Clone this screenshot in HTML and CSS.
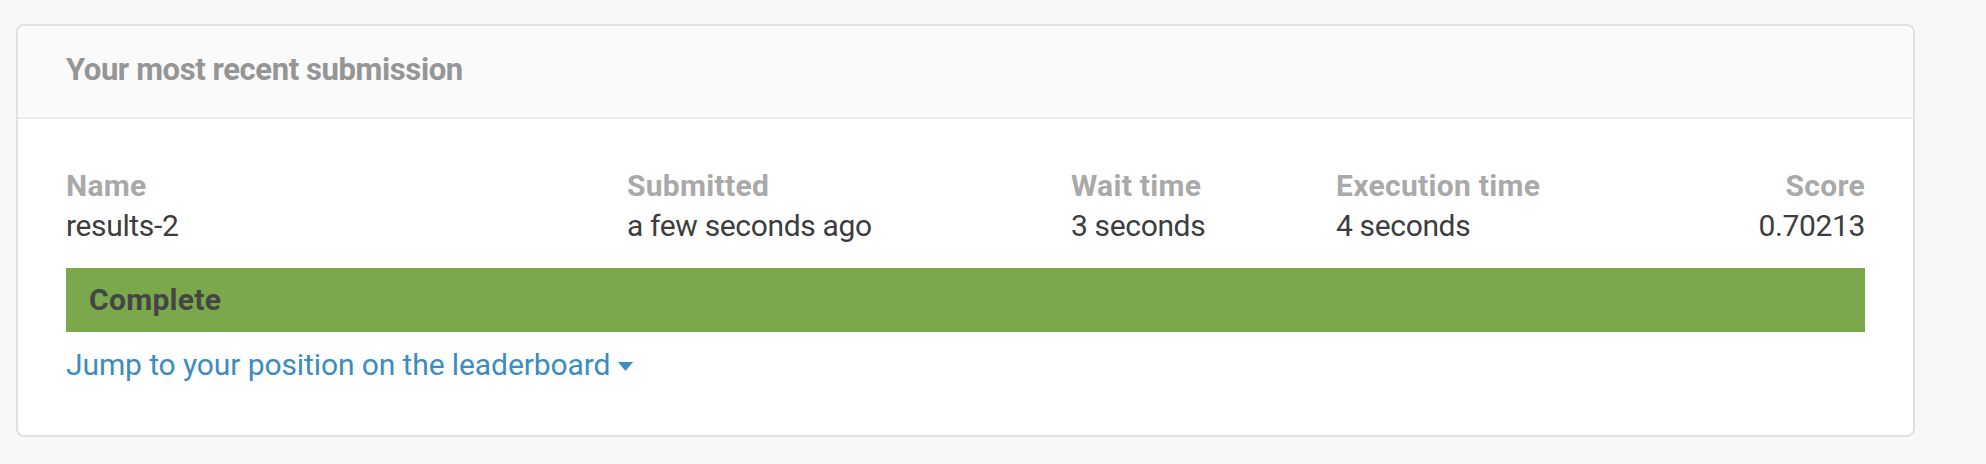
FILE: index.html
```html
<!DOCTYPE html>
<html lang="en">
<head>
<meta charset="utf-8">
<title>Your most recent submission</title>
<link rel="stylesheet" href="styles.css">
</head>
<body>
<div class="page">
  <section class="card">
    <header class="card-header">
      <h2 class="card-title">Your most recent submission</h2>
    </header>
    <div class="card-body">
      <div class="table">
        <div class="cell"><div class="label">Name</div><div class="value">results-2</div></div>
        <div class="cell"><div class="label">Submitted</div><div class="value">a few seconds ago</div></div>
        <div class="cell"><div class="label">Wait time</div><div class="value">3 seconds</div></div>
        <div class="cell"><div class="label">Execution time</div><div class="value">4 seconds</div></div>
        <div class="cell cell-right"><div class="label">Score</div><div class="value">0.70213</div></div>
      </div>
      <div class="status">Complete</div>
      <a class="jump" href="#">Jump to your position on the leaderboard<svg class="caret" width="15" height="9" viewBox="0 0 15 9"><path d="M0 0 H15 L7.5 9 Z" fill="currentColor"/></svg></a>
    </div>
  </section>
</div>
</body>
</html>
```
FILE: styles.css
```css
html, body {
  margin: 0;
  padding: 0;
  background: #f7f8fa;
}
body {
  font-family: Roboto, "Liberation Sans", Arial, sans-serif;
  color: #3d3d3f;
}
.page {
  padding: 24px 71px 27px 16px;
}
.card {
  background: #ffffff;
  border: 2px solid #dfe0e2;
  border-radius: 8px;
  overflow: hidden;
}
.card-header {
  background: #fafafa;
  border-bottom: 2px solid #ebebeb;
  padding: 24px 48px 27px;
}
.card-title {
  margin: 0;
  font-size: 31px;
  line-height: 40px;
  font-weight: 700;
  letter-spacing: -0.4px;
  color: #959595;
}
.card-body {
  padding: 47px 48px 50px;
}
.table {
  display: grid;
  grid-template-columns: 561px 444px 265px 1fr auto;
}
.cell-right {
  text-align: right;
}
.label {
  font-size: 30px;
  line-height: 40px;
  font-weight: 700;
  letter-spacing: 0.3px;
  color: #a9a9a9;
}
.value {
  font-size: 30px;
  line-height: 40px;
  letter-spacing: -0.35px;
  color: #3d3d3f;
}
.status {
  margin-top: 22px;
  height: 64px;
  line-height: 64px;
  background: #7ba84a;
  padding-left: 23px;
  font-size: 30px;
  font-weight: 700;
  letter-spacing: 0.3px;
  color: #454547;
}
.jump {
  display: inline-flex;
  align-items: center;
  margin-top: 13px;
  font-size: 30px;
  line-height: 40px;
  letter-spacing: -0.1px;
  color: #3b8cc0;
  text-decoration: none;
}
.caret {
  margin-left: 8px;
  margin-top: 2px;
}
```
